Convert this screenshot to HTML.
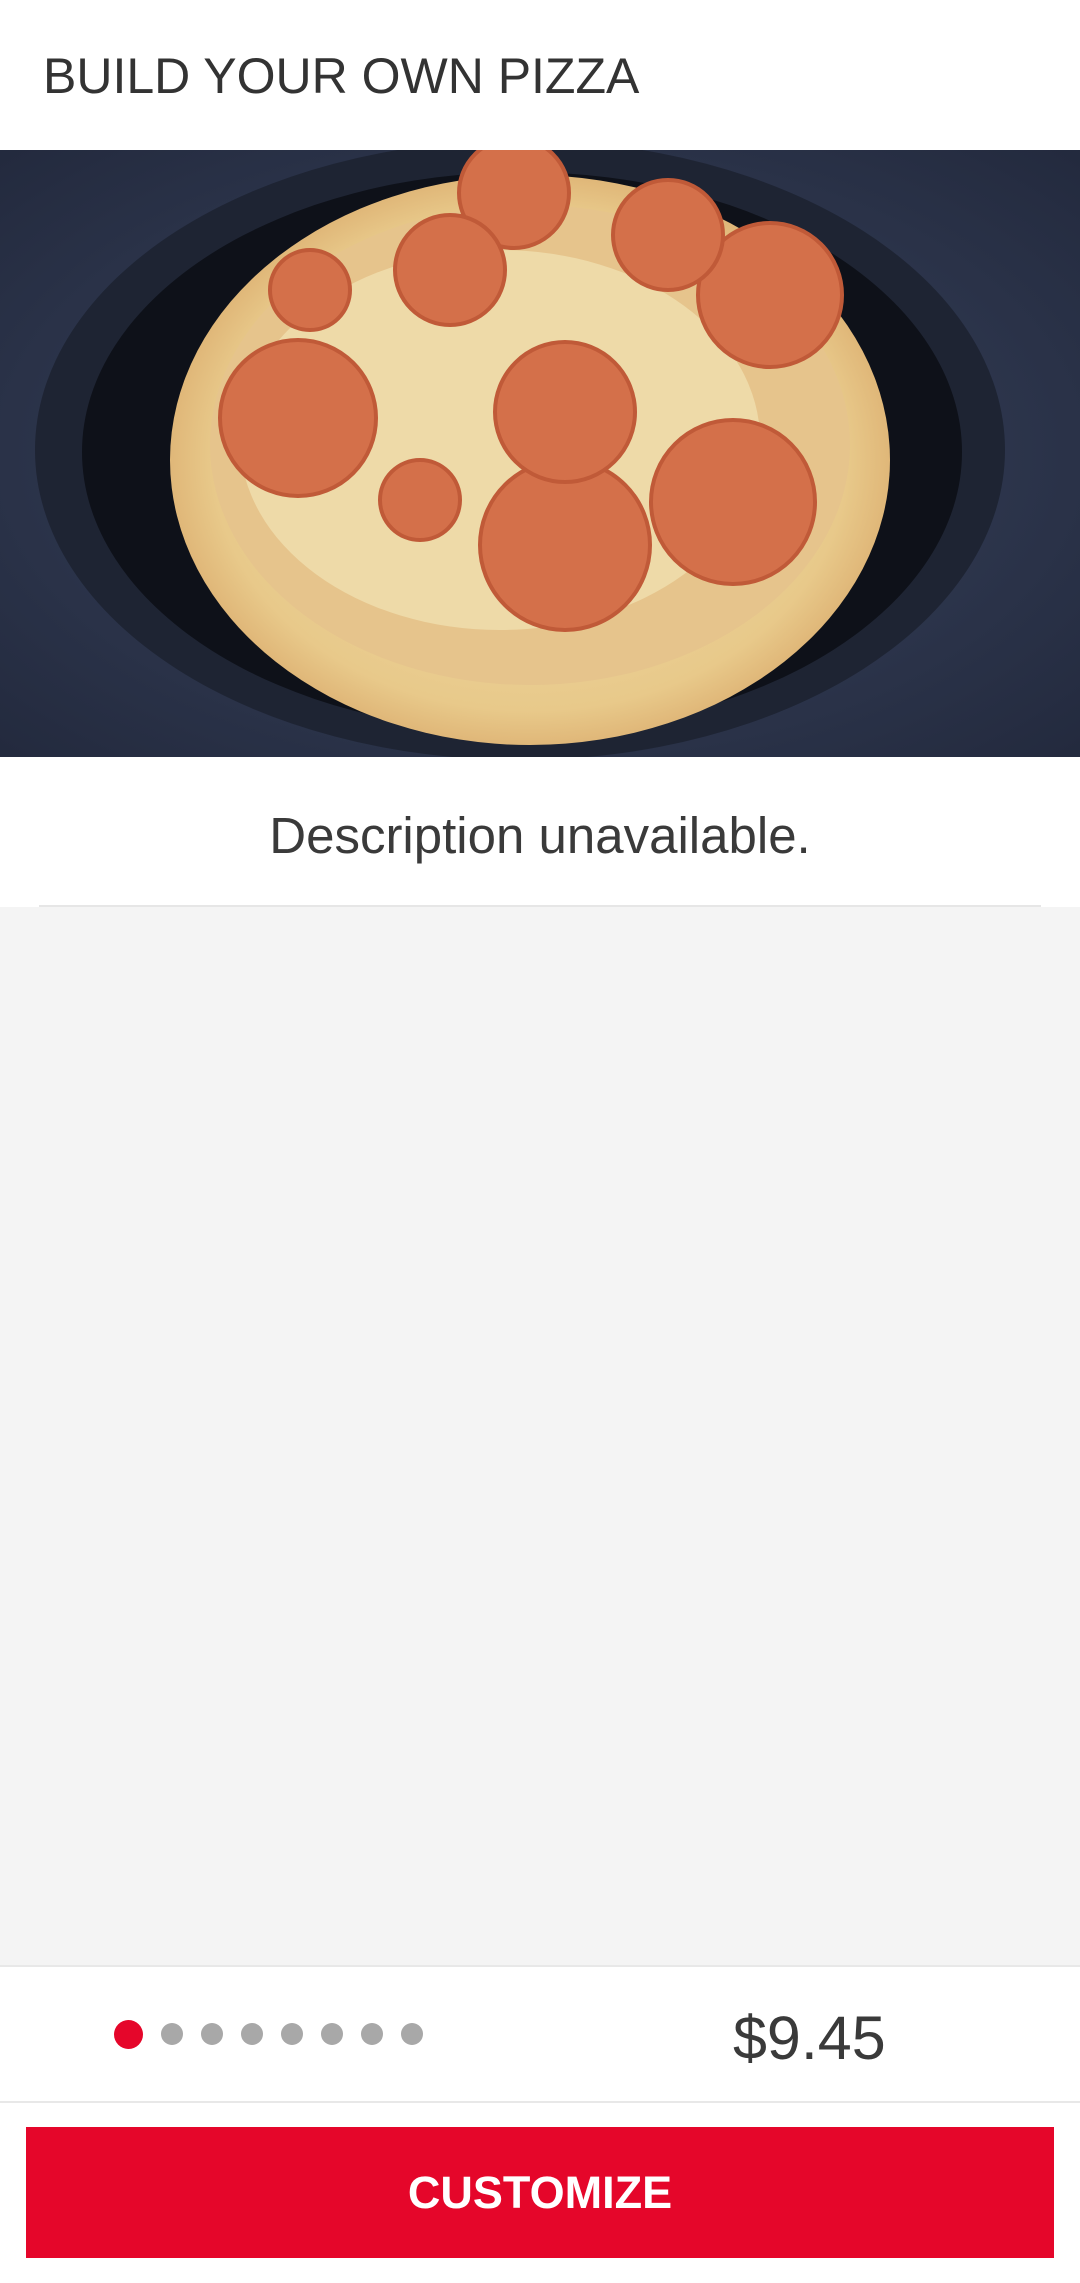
<!DOCTYPE html>
<html><head><meta charset="utf-8"><style>
html,body{margin:0;padding:0;width:1080px;height:2281px;overflow:hidden;background:#fff;font-family:"Liberation Sans",sans-serif;}
.hdr{position:absolute;top:0;left:0;width:1080px;height:150px;background:#fff;}
.hdr span{position:absolute;left:43px;top:47px;font-size:50px;color:#333;letter-spacing:0px;}
.img{position:absolute;top:150px;left:0;width:1080px;height:607px;}
.desc{position:absolute;top:757px;left:0;width:1080px;height:150px;background:#fff;text-align:center;}
.desc span{display:block;padding-top:49px;font-size:51px;color:#3a3a3a;}
.div{position:absolute;top:905px;left:39px;width:1002px;height:2px;background:#e6e6e6;}
.gray{position:absolute;top:907px;left:0;width:1080px;height:1058px;background:#f4f4f4;}
.bar{position:absolute;top:1965px;left:0;width:1080px;height:316px;background:#fff;border-top:2px solid #e8e8e8;}
.dot{position:absolute;width:22px;height:22px;border-radius:50%;background:#a8a8a8;top:56px;}
.price{position:absolute;left:733px;top:36px;font-size:61px;color:#3a3a3a;}
.line{position:absolute;top:134px;left:0;width:1080px;height:2px;background:#e8e8e8;}
.btn{position:absolute;top:160px;left:26px;width:1028px;height:131px;background:#e5062a;color:#fff;font-weight:bold;font-size:45px;text-align:center;line-height:131px;}
</style></head><body>
<div class="hdr"><span>BUILD YOUR OWN PIZZA</span></div>
<svg class="img" width="1080" height="607" viewBox="0 0 1080 607">
<defs>
<radialGradient id="bg" cx="50%" cy="50%" r="70%"><stop offset="0" stop-color="#3a4560"/><stop offset="1" stop-color="#232a3e"/></radialGradient>
<radialGradient id="cr" cx="50%" cy="50%" r="55%"><stop offset="0" stop-color="#f2e0b0"/><stop offset="0.8" stop-color="#e8c98a"/><stop offset="1" stop-color="#d9a86a"/></radialGradient>
</defs>
<rect width="1080" height="607" fill="url(#bg)"/>
<ellipse cx="520" cy="300" rx="485" ry="310" fill="#1e2433"/>
<ellipse cx="522" cy="302" rx="440" ry="280" fill="#0e1119"/>
<ellipse cx="530" cy="310" rx="360" ry="285" fill="url(#cr)"/>
<ellipse cx="530" cy="295" rx="320" ry="240" fill="#e6c48c"/>
<ellipse cx="500" cy="290" rx="260" ry="190" fill="#eedaa8"/>
<g fill="#d4704a" stroke="#c05a38" stroke-width="4">
<circle cx="298" cy="268" r="78"/><circle cx="565" cy="395" r="85"/><circle cx="733" cy="352" r="82"/>
<circle cx="514" cy="43" r="55"/><circle cx="770" cy="145" r="72"/><circle cx="565" cy="262" r="70"/>
<circle cx="668" cy="85" r="55"/><circle cx="450" cy="120" r="55"/><circle cx="310" cy="140" r="40"/>
<circle cx="420" cy="350" r="40"/>
</g>
</svg>
<div class="desc"><span>Description unavailable.</span></div>
<div class="div"></div>
<div class="gray"></div>
<div class="bar">
<div class="dot" style="left:114px;width:29px;height:29px;top:53px;background:#e5062a"></div>
<div class="dot" style="left:161px"></div>
<div class="dot" style="left:201px"></div>
<div class="dot" style="left:241px"></div>
<div class="dot" style="left:281px"></div>
<div class="dot" style="left:321px"></div>
<div class="dot" style="left:361px"></div>
<div class="dot" style="left:401px"></div>
<div class="price">$9.45</div>
<div class="line"></div>
<div class="btn">CUSTOMIZE</div>
</div>
</body></html>
